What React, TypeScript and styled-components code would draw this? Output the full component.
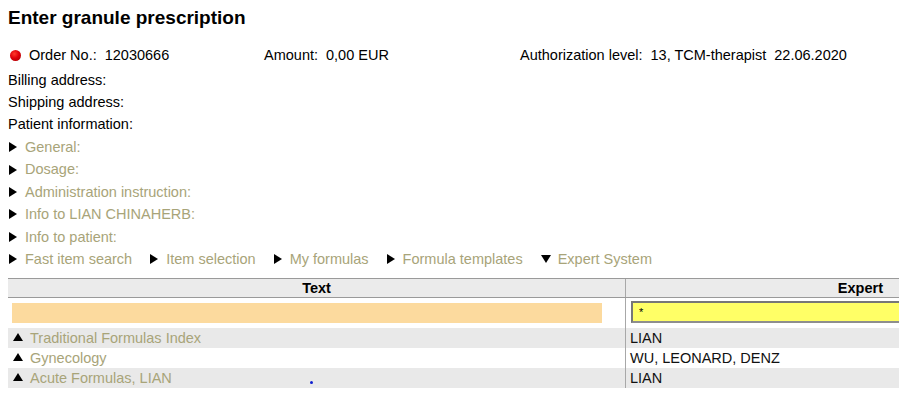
import styled, {createGlobalStyle} from 'styled-components'

const GlobalStyle = createGlobalStyle`
  html {
    overflow: hidden;
  }

  body {
    margin: 8px 0 8px 8px;
    background: #fff;
    color: #000;
    font-family: 'Liberation Sans', Arial, sans-serif;
    font-size: 14.5px;
  }
`

type Dir = 'right' | 'down' | 'up'

const points: Record<Dir, string> = {
  right: '0,0 8,5 0,10',
  down: '0,0 10,0 5,8',
  up: '0,8 10,8 5,0',
}

function Arrow({dir}: {dir: Dir}) {
  const w = dir === 'right' ? 8 : 10
  const h = dir === 'right' ? 10 : 8
  return (
    <ArrowSvg width={w} height={h} viewBox={`0 0 ${w} ${h}`} $dir={dir}>
      <polygon points={points[dir]} fill='#000' />
    </ArrowSvg>
  )
}

const sections = [
  'General:',
  'Dosage:',
  'Administration instruction:',
  'Info to LIAN CHINAHERB:',
  'Info to patient:',
]

const tabs: {label: string; dir: Dir}[] = [
  {label: 'Fast item search', dir: 'right'},
  {label: 'Item selection', dir: 'right'},
  {label: 'My formulas', dir: 'right'},
  {label: 'Formula templates', dir: 'right'},
  {label: 'Expert System', dir: 'down'},
]

const formulas = [
  {name: 'Traditional Formulas Index', expert: 'LIAN'},
  {name: 'Gynecology', expert: 'WU, LEONARD, DENZ'},
  {name: 'Acute Formulas, LIAN', expert: 'LIAN'},
]

export default function App() {
  return (
    <>
      <GlobalStyle />
      <Title>Enter granule prescription</Title>

      <OrderRow>
        <Field>
          <StatusDot />
          <span>Order No.:</span>
          <Value>12030666</Value>
        </Field>
        <Field>
          <span>Amount:</span>
          <Value>0,00 EUR</Value>
        </Field>
        <Field>
          <span>Authorization level:</span>
          <Value>13, TCM-therapist</Value>
          <Value>22.06.2020</Value>
        </Field>
      </OrderRow>

      <InfoList>
        <Line>Billing address:</Line>
        <Line>Shipping address:</Line>
        <Line>Patient information:</Line>
      </InfoList>

      <SectionList>
        {sections.map(s => (
          <SectionLine key={s}>
            <Arrow dir='right' />
            <LinkText>{s}</LinkText>
          </SectionLine>
        ))}
        <TabBar>
          {tabs.map(t => (
            <Tab key={t.label}>
              <Arrow dir={t.dir} />
              <LinkText>{t.label}</LinkText>
            </Tab>
          ))}
        </TabBar>
      </SectionList>

      <Table>
        <HeaderRow>
          <HeaderCell>Text</HeaderCell>
          <HeaderCell $expert>Expert</HeaderCell>
        </HeaderRow>
        <FilterRow>
          <FilterCell>
            <TextFilter readOnly value='' />
          </FilterCell>
          <FilterCell $expert>
            <ExpertFilter readOnly value='*' />
          </FilterCell>
        </FilterRow>
        {formulas.map((f, i) => (
          <DataRow key={f.name} $shaded={i % 2 === 0}>
            <NameCell>
              <Arrow dir='up' />
              <LinkText>{f.name}</LinkText>
              {i === 2 && <StrayDot />}
            </NameCell>
            <ExpertCell>{f.expert}</ExpertCell>
          </DataRow>
        ))}
      </Table>
    </>
  )
}

const Title = styled.h1`
  margin: 0;
  font-size: 19px;
  line-height: 20px;
  font-weight: bold;
`

const OrderRow = styled.div`
  display: grid;
  grid-template-columns: 256px 256px auto;
  margin-top: 16px;
  line-height: 22px;
  white-space: nowrap;
`

const Field = styled.div`
  display: flex;
  align-items: center;
`

const StatusDot = styled.span`
  width: 11px;
  height: 11px;
  margin: 0 8px 0 2px;
  border-radius: 50%;
  background: radial-gradient(circle at 40% 35%, #ff3b2b 0%, #e0000a 45%, #9c0000 100%);
`

const Value = styled.span`
  margin-left: 8px;
`

const InfoList = styled.div`
  margin-top: 3px;
  line-height: 22px;
`

const Line = styled.div``

const SectionList = styled.div`
  margin-top: 1px;
  line-height: 22.4px;
`

const SectionLine = styled.div`
  display: flex;
  align-items: center;
  padding-left: 1px;
`

const ArrowSvg = styled.svg<{$dir: Dir}>`
  flex: none;
  margin-right: ${p => (p.$dir === 'right' ? '8px' : '7px')};
  margin-top: ${p => (p.$dir === 'up' ? '-2px' : '0')};
`

const LinkText = styled.span`
  color: #a8a479;
`

const TabBar = styled.div`
  display: flex;
  gap: 18px;
  padding-left: 1px;
`

const Tab = styled.div`
  display: flex;
  align-items: center;
`

const Table = styled.div`
  margin-top: 8px;
`

const HeaderRow = styled.div`
  display: grid;
  grid-template-columns: 617px 1fr;
  height: 18px;
  line-height: 18px;
  background: #ebebeb;
  border-top: 1px solid #9a9a9a;
  border-bottom: 1px solid #9a9a9a;
  font-weight: bold;
`

const HeaderCell = styled.div<{$expert?: boolean}>`
  text-align: ${p => (p.$expert ? 'right' : 'center')};
  padding-right: ${p => (p.$expert ? '16px' : '0')};
  border-left: ${p => (p.$expert ? '1px solid #a8a8a8' : 'none')};
`

const FilterRow = styled.div`
  display: grid;
  grid-template-columns: 617px 1fr;
  height: 30px;
`

const FilterCell = styled.div<{$expert?: boolean}>`
  display: flex;
  align-items: center;
  padding-left: ${p => (p.$expert ? '5px' : '4px')};
  border-left: ${p => (p.$expert ? '1px solid #a8a8a8' : 'none')};
`

const TextFilter = styled.input`
  width: 590px;
  height: 20px;
  padding: 0;
  border: none;
  background: #fcda9e;
  outline: none;
`

const ExpertFilter = styled.input`
  flex: 1;
  min-width: 0;
  box-sizing: border-box;
  height: 22px;
  margin-top: -2px;
  padding: 0 6px;
  border: 2px solid #8e8e8e;
  border-top-color: #777;
  border-left-color: #777;
  border-right: none;
  background: #ffff66;
  font-family: 'Liberation Sans', Arial, sans-serif;
  font-size: 11px;
  color: #000;
  outline: none;
`

const DataRow = styled.div<{$shaded: boolean}>`
  display: grid;
  grid-template-columns: 617px 1fr;
  height: 20px;
  line-height: 20px;
  background: ${p => (p.$shaded ? '#e9e9e9' : '#fff')};
  white-space: nowrap;
`

const NameCell = styled.div`
  position: relative;
  display: flex;
  align-items: center;
  padding-left: 5px;
`

const ExpertCell = styled.div`
  padding-left: 4px;
  border-left: 1px solid #a8a8a8;
  color: #111;
`

const StrayDot = styled.span`
  position: absolute;
  left: 302px;
  top: 13px;
  width: 3px;
  height: 3px;
  border-radius: 50%;
  background: #1020d0;
`
